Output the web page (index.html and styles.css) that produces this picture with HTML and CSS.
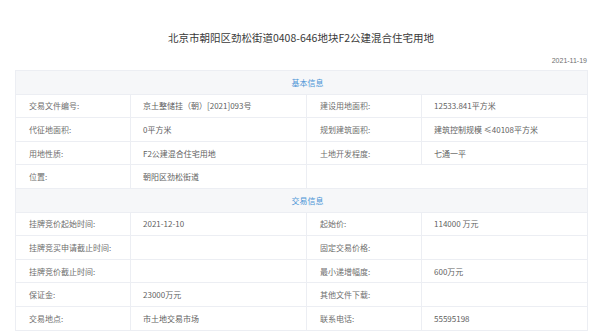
FILE: index.html
```html
<!DOCTYPE html>
<html lang="zh-CN">
<head>
<meta charset="utf-8">
<title>北京市朝阳区劲松街道0408-646地块F2公建混合住宅用地</title>
<link rel="stylesheet" href="styles.css">
</head>
<body>
<div class="page">
  <h1 class="title">北京市朝阳区劲松街道0408-646地块F2公建混合住宅用地</h1>
  <div class="date">2021-11-19</div>
  <table class="info">
    <colgroup>
      <col class="c1"><col class="c2"><col class="c3"><col class="c4">
    </colgroup>
    <tr class="sec"><td colspan="4">基本信息</td></tr>
    <tr><td class="lb">交易文件编号:</td><td>京土整储挂（朝）[2021]093号</td><td class="lb">建设用地面积:</td><td>12533.841平方米</td></tr>
    <tr><td class="lb">代征地面积:</td><td>0平方米</td><td class="lb">规划建筑面积:</td><td>建筑控制规模 ≤40108平方米</td></tr>
    <tr><td class="lb">用地性质:</td><td>F2公建混合住宅用地</td><td class="lb">土地开发程度:</td><td>七通一平</td></tr>
    <tr><td class="lb">位置:</td><td>朝阳区劲松街道</td><td colspan="2"></td></tr>
    <tr class="sec"><td colspan="4">交易信息</td></tr>
    <tr><td class="lb">挂牌竞价起始时间:</td><td>2021-12-10</td><td class="lb">起始价:</td><td>114000 万元</td></tr>
    <tr><td class="lb">挂牌竞买申请截止时间:</td><td></td><td class="lb">固定交易价格:</td><td></td></tr>
    <tr><td class="lb">挂牌竞价截止时间:</td><td></td><td class="lb">最小递增幅度:</td><td>600万元</td></tr>
    <tr><td class="lb">保证金:</td><td>23000万元</td><td class="lb">其他文件下载:</td><td></td></tr>
    <tr><td class="lb">交易地点:</td><td>市土地交易市场</td><td class="lb">联系电话:</td><td>55595198</td></tr>
  </table>
</div>
</body>
</html>
```
FILE: styles.css
```css
html, body {
  margin: 0;
  padding: 0;
  background: #ffffff;
}
body {
  font-family: "Noto Sans CJK SC", "Noto Sans", "Liberation Sans", sans-serif;
  color: #606266;
}
.page {
  padding: 0 13px 0 15px;
}
.title {
  margin: 0;
  padding-top: 31px;
  font-size: 10.5px;
  line-height: 14px;
  font-weight: normal;
  color: #3a3a3a;
  text-align: center;
}
.date {
  margin-top: 11px;
  font-size: 7px;
  line-height: 10px;
  color: #707070;
  text-align: right;
  font-family: "Liberation Sans", "Noto Sans CJK SC", sans-serif;
}
.info {
  margin-top: 4px;
  width: 572px;
  border-collapse: collapse;
  table-layout: fixed;
  font-size: 8px;
  border: 1px solid #eef0f4;
}
.c1 { width: 115px; }
.c2 { width: 176px; }
.c3 { width: 115px; }
.c4 { width: 166px; }
.info td {
  height: 22.6px;
  padding: 0 12px;
  border: 1px solid #eceef3;
  color: #5f5f5f;
  white-space: nowrap;
  overflow: hidden;
}
.info td.lb {
  color: #6e6e6e;
  padding-left: 13px;
}
.info tr.sec td {
  background: #f6f7f9;
  color: #4b94d6;
  text-align: center;
  padding-left: 24px;
}
```
